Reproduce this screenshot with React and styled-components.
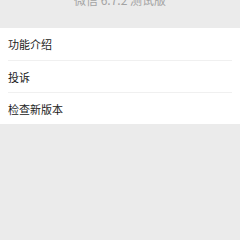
import React from 'react';
import styled, { createGlobalStyle } from 'styled-components';

const GlobalStyle = createGlobalStyle`
  html, body {
    margin: 0;
    padding: 0;
    background: #ebebeb;
    font-family: "Noto Sans CJK SC", "Liberation Sans", sans-serif;
  }
`

const Page = styled.div`
  width: 240px;
  height: 240px;
  overflow: hidden;
  background: #ebebeb;
`

const Header = styled.header`
  height: 28px;
  overflow: hidden;
  display: flex;
  justify-content: center;
`

const Version = styled.div`
  margin-top: -6px;
  font-size: 12px;
  line-height: 12px;
  color: #a3a3a3;
`

const List = styled.ul`
  margin: 0;
  padding: 0 8px;
  list-style: none;
  background: #ffffff;
`

const Row = styled.li`
  height: 32px;
  display: flex;
  align-items: center;
  font-size: 11px;
  color: #222222;
  border-top: ${p => (p.$first ? 'none' : '1px solid #f0f0f0')};
  box-sizing: border-box;
`

const items = ['功能介绍', '投诉', '检查新版本'];

export default function App() {
  return (
    <Page>
      <GlobalStyle />
      <Header>
        <Version>微信 6.7.2 测试版</Version>
      </Header>
      <List>
        {items.map((t, i) => (
          <Row key={t} $first={i === 0}>{t}</Row>
        ))}
      </List>
    </Page>
  );
}
